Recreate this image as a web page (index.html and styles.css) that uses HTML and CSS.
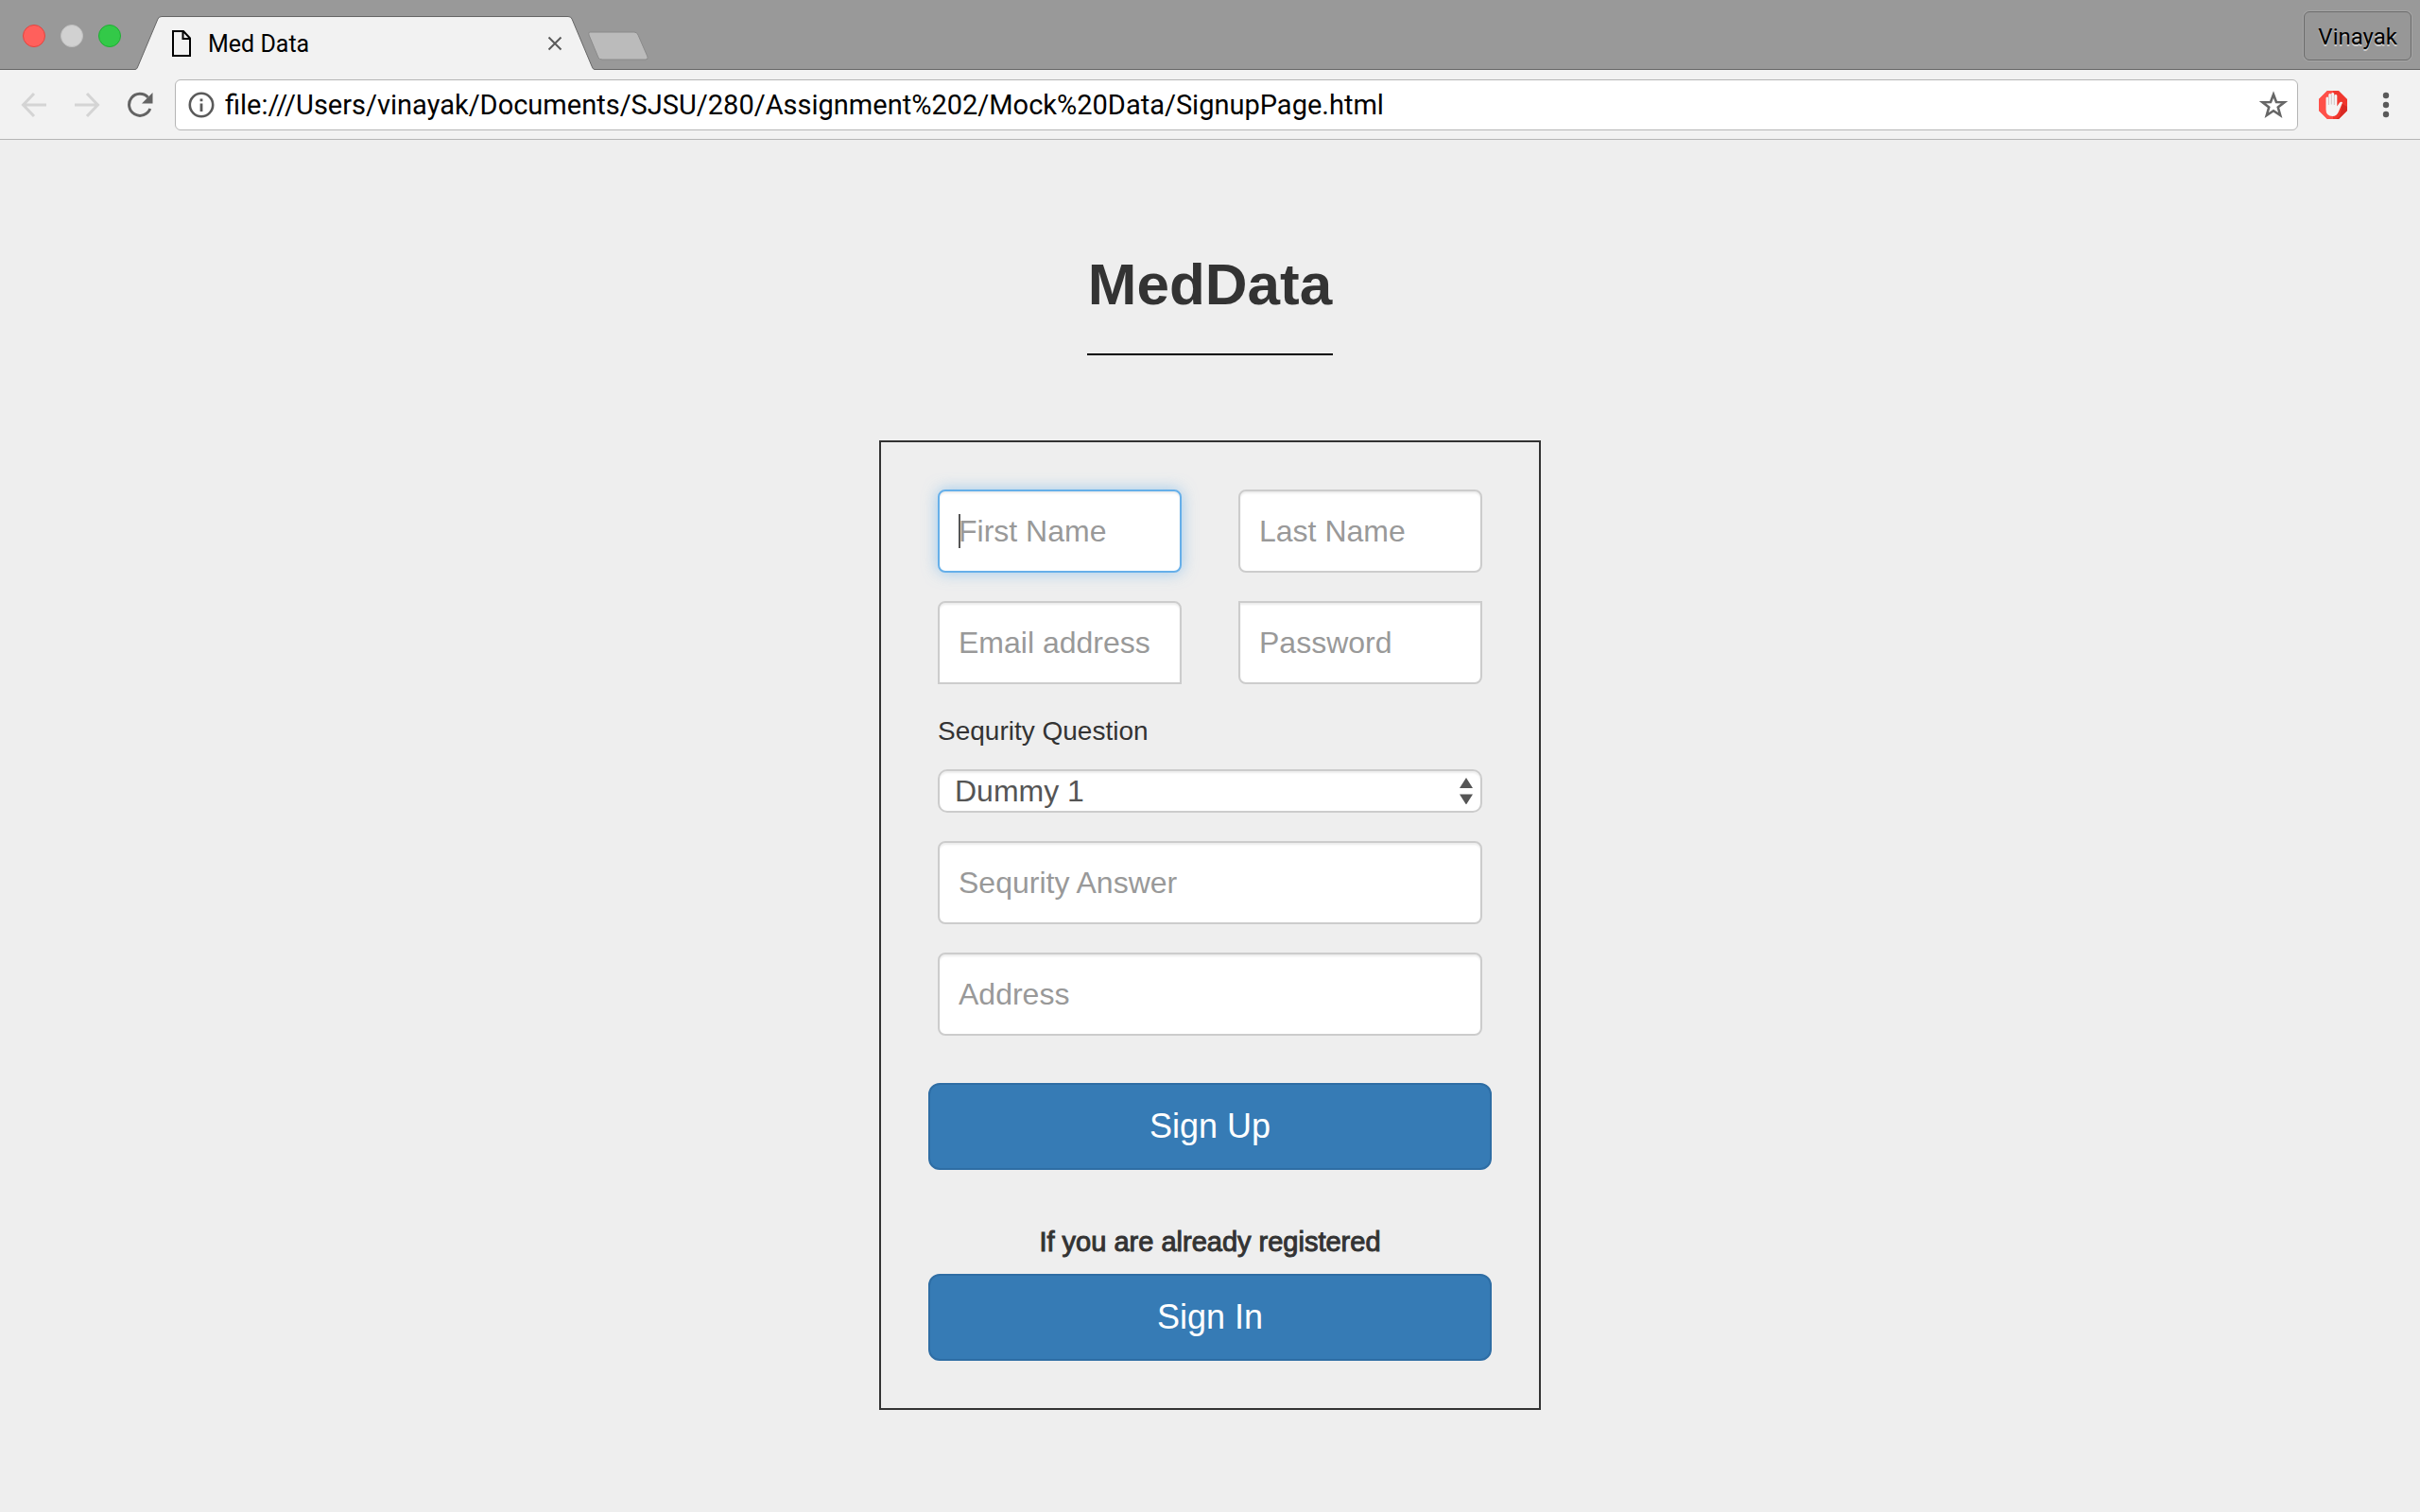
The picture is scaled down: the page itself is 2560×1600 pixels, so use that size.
FILE: index.html
```html
<!DOCTYPE html>
<html lang="en">
<head>
  <meta charset="utf-8">
  <title>Med Data</title>
  <link rel="stylesheet" href="styles.css">
</head>
<body>
  <header class="browser">
    <div class="tab-strip">
      <div class="lights">
        <span class="light light-close"></span>
        <span class="light light-min"></span>
        <span class="light light-max"></span>
      </div>
      <div class="tab">
        <svg class="tab-edge" width="28" height="57" viewBox="0 0 28 57" aria-hidden="true">
          <path d="M0 57 L0 56.500 Q2 56.500 3 53 L24 3 Q25 .5 28 .5 L28 57Z" fill="#f2f2f2"/>
          <path d="M0 56.500 Q2 56.500 3 53 L24 3 Q25 .5 28 .5" fill="none" stroke="#666"/>
        </svg>
        <div class="tab-body">
          <svg width="20" height="28" viewBox="0 0 20 28" fill="none" stroke="#000" stroke-width="2" aria-hidden="true">
            <path d="M1 1H12L19 8.500V27H1ZM11.500 1V9H19"/>
          </svg>
          <span class="tab-title">Med Data</span>
          <button class="icon-button" type="button" aria-label="Close tab">
            <svg width="16" height="16" viewBox="0 0 16 16" stroke="#5a5a5a" stroke-width="2"><path d="M1.500 1.500 14.500 14.500M14.500 1.500 1.500 14.500"/></svg>
          </button>
        </div>
        <svg class="tab-edge" width="28" height="57" viewBox="0 0 28 57" aria-hidden="true">
          <path d="M28 57 L28 56.500 Q26 56.500 25 53 L4 3 Q3 .5 0 .5 L0 57Z" fill="#f2f2f2"/>
          <path d="M28 56.500 Q26 56.500 25 53 L4 3 Q3 .5 0 .5" fill="none" stroke="#666"/>
        </svg>
      </div>
      <button class="icon-button new-tab" type="button" aria-label="New tab">
        <svg width="66" height="32" viewBox="0 0 66 32"><path d="M3 1H50Q53 1 54 4L64 27Q65 30 62 30H16Q13 30 12 28L2 4Q1 1 3 1Z" fill="#bbb" stroke="#8a8a8a"/></svg>
      </button>
      <button class="profile" type="button">Vinayak</button>
    </div>
    <div class="toolbar">
      <button class="icon-button" type="button" aria-label="Back">
        <svg width="28" height="28" viewBox="0 0 28 28" fill="none" stroke="#d4d4d4" stroke-width="3"><path d="M27 14H3M14 2 2.500 14 14 26"/></svg>
      </button>
      <button class="icon-button" type="button" aria-label="Forward">
        <svg width="28" height="28" viewBox="0 0 28 28" fill="none" stroke="#d4d4d4" stroke-width="3"><path d="M1 14H25M14 2 25.500 14 14 26"/></svg>
      </button>
      <button class="icon-button" type="button" aria-label="Reload">
        <svg width="28" height="28" viewBox="0 0 28 28"><path d="M22.500 6A11.500 11.500 0 1 0 24.800 18" fill="none" stroke="#636363" stroke-width="3"/><path d="M27.500 1V12.500H16Z" fill="#636363"/></svg>
      </button>
      <div class="address">
        <svg width="28" height="28" viewBox="0 0 28 28" aria-hidden="true"><circle cx="14" cy="14" r="12.200" fill="none" stroke="#5a5a5a" stroke-width="2.600"/><path d="M12.600 7.500h2.800v2.800h-2.800zM12.600 12.500h2.800v8.500h-2.800z" fill="#5a5a5a"/></svg>
        <input class="url" type="text" aria-label="Address" value="file:///Users/vinayak/Documents/SJSU/280/Assignment%202/Mock%20Data/SignupPage.html">
        <button class="icon-button" type="button" aria-label="Bookmark">
          <svg width="30" height="30" viewBox="0 0 30 30"><path d="M15 4 18 12 26.500 12.300 19.800 17.600 22.200 26 15 21.200 7.800 26 10.200 17.600 3.500 12.300 12 12Z" fill="none" stroke="#666" stroke-width="2.600"/></svg>
        </button>
      </div>
      <div class="extensions">
        <button class="icon-button" type="button" aria-label="Ad blocker">
          <svg width="30" height="30" viewBox="0 0 30 30">
            <path d="M9 0H21L30 9V21L21 30H9L0 21V9Z" fill="#f0382f"/>
            <path d="M9 0H15V30H9L0 21V9Z" fill="#ff5049"/>
            <path d="M25 14 22 27 18 30H21L30 21V17Z" fill="#d92a24"/>
            <path d="M7.500 7.500Q9 5.500 10.300 7.500V4Q11.700 2 13.200 4V3Q14.800 1 16.200 3V5Q18 3 19.300 5V16.500L22 12.500Q24 11 25 12.500L21 22Q19 27 14.500 27Q7.500 27 7.500 20Z" fill="#f4f4f4"/>
            <path d="M10.400 7V15M13.300 4V14.500M16.300 5V15" stroke="#c9b5b5" stroke-width=".8"/>
          </svg>
        </button>
        <button class="icon-button" type="button" aria-label="Menu">
          <svg width="8" height="28" viewBox="0 0 8 28" fill="#5a5a5a"><circle cx="4" cy="4" r="3.200"/><circle cx="4" cy="14" r="3.200"/><circle cx="4" cy="24" r="3.200"/></svg>
        </button>
      </div>
    </div>
  </header>

  <main class="page">
    <h1 class="brand">MedData</h1>
    <form class="card">
      <div class="fields">
        <div class="field-row">
          <div class="field-focus">
            <input class="field field-active" type="text" placeholder="First Name" aria-label="First Name">
            <span class="caret"></span>
          </div>
          <input class="field" type="text" placeholder="Last Name" aria-label="Last Name">
        </div>
        <div class="field-row">
          <input class="field field-email" type="email" placeholder="Email address" aria-label="Email address">
          <input class="field field-password" type="password" placeholder="Password" aria-label="Password">
        </div>
        <div class="question">
          <label class="label" for="question">Sequrity Question</label>
          <div class="select-wrap">
            <select class="select" id="question"><option>Dummy 1</option></select>
            <svg class="select-arrows" width="14" height="28" viewBox="0 0 14 28" fill="#555" aria-hidden="true"><path d="M7 0 14 11H0ZM7 28.500 0 17.500H14Z"/></svg>
          </div>
        </div>
        <input class="field" type="text" placeholder="Sequrity Answer" aria-label="Sequrity Answer">
        <input class="field" type="text" placeholder="Address" aria-label="Address">
      </div>
      <button class="submit" type="submit">Sign Up</button>
      <p class="hint">If you are already registered</p>
      <button class="submit" type="button">Sign In</button>
    </form>
  </main>
</body>
</html>
```
FILE: styles.css
```css
* {
  box-sizing: border-box;
}

body {
  margin: 0;
  min-height: 100vh;
  background: #eee;
  color: #333;
  font-family: "Liberation Sans", Arial, sans-serif;
}

button,
input,
select {
  margin: 0;
  font-family: inherit;
}

svg {
  display: block;
  flex: none;
}

/* Browser window */
.browser {
  font-family: Roboto, sans-serif;
  color: #000;
}

.icon-button {
  flex: none;
  padding: 0;
  border: 0;
  background: none;
}

.tab-strip {
  display: flex;
  height: 74px;
  padding-right: 9px;
  background: #999;
  box-shadow: inset 0 -1px #666;
}

.lights {
  display: flex;
  gap: 16px;
  width: 143px;
  padding: 26px 0 0 24px;
}

.light {
  width: 24px;
  height: 24px;
  border: 1px solid;
  border-radius: 50%;
}

.light-close {
  background: #ff605c;
  border-color: #e2443f;
}

.light-min {
  background: #d1d1d1;
  border-color: #c0c0c0;
}

.light-max {
  background: #33c948;
  border-color: #1fae33;
}

.tab {
  display: flex;
  align-self: flex-end;
  width: 486px;
}

.tab-body {
  flex: 1;
  display: flex;
  align-items: center;
  padding: 0 6px 0 11px;
  border-top: 1px solid #666;
  background: #f2f2f2;
}

.tab-title {
  flex: 1;
  padding-left: 18px;
  font-size: 25px;
}

.new-tab {
  align-self: flex-start;
  margin: 33px auto 0 -8px;
}

.profile {
  align-self: flex-start;
  height: 52px;
  margin-top: 12px;
  padding: 2px 14px 0;
  border: 1px solid #6b6b6b;
  border-radius: 6px;
  background: #979797;
  box-shadow: 0 0 0 1px #a6a6a6;
  color: #000;
  font-size: 24px;
  text-shadow: 0 2px #ccc;
}

.toolbar {
  display: flex;
  align-items: center;
  gap: 28px;
  height: 74px;
  padding: 0 32px 0 22px;
  border-bottom: 1px solid #b5b5b5;
  background: #f2f2f2;
}

.address {
  flex: 1;
  display: flex;
  align-items: center;
  height: 54px;
  margin: 0 -6px 0 -5px;
  padding: 0 10px 0 13px;
  border: 1px solid #b5b5b5;
  border-radius: 6px;
  background: #fff;
}

.extensions {
  display: flex;
  align-items: center;
  gap: 37px;
}

.url {
  flex: 1;
  min-width: 0;
  padding: 0 11px;
  border: 0;
  background: none;
  color: #000;
  font-size: 29px;
}

/* Sign-up page */
.page {
  display: flex;
  flex-direction: column;
  align-items: center;
  padding: 122px 24px 108px;
}

.brand {
  margin: 0 0 90px;
  padding: 0 1px 42px;
  border-bottom: 2px solid #000;
  font-size: 62px;
  line-height: 62px;
}

.card {
  display: flex;
  flex-direction: column;
  width: 100%;
  max-width: 700px;
  padding: 50px;
  border: 2px solid #333;
}

.fields {
  display: flex;
  flex-direction: column;
  gap: 30px;
  margin: 0 10px 50px;
}

.field-row {
  display: grid;
  grid-template-columns: 1fr 1fr;
  gap: 60px;
}

.field {
  width: 100%;
  min-width: 0;
  height: 88px;
  padding: 0 20px;
  border: 2px solid #ccc;
  border-radius: 8px;
  background: #fff;
  box-shadow: inset 0 2px 2px rgba(0, 0, 0, 0.075);
  color: #555;
  font-size: 32px;
}

.field::placeholder {
  color: #999;
}

.field-focus {
  position: relative;
}

.field-active {
  border-color: #66afe9;
  box-shadow: inset 0 2px 2px rgba(0, 0, 0, 0.075), 0 0 16px rgba(102, 175, 233, 0.6);
}

.caret {
  position: absolute;
  top: 26px;
  left: 22px;
  width: 2px;
  height: 36px;
  background: #555;
}

.field-email {
  border-bottom-left-radius: 0;
  border-bottom-right-radius: 0;
}

.field-password {
  border-top-left-radius: 0;
  border-top-right-radius: 0;
}

.question {
  display: flex;
  flex-direction: column;
  gap: 20px;
}

.label {
  font-size: 28px;
  line-height: 40px;
}

.select-wrap {
  position: relative;
}

.select {
  display: block;
  width: 100%;
  height: 46px;
  padding: 0 16px;
  border: 2px solid #ccc;
  border-radius: 10px;
  appearance: none;
  background: #fff;
  box-shadow: inset 0 2px 2px rgba(0, 0, 0, 0.075);
  color: #555;
  font-size: 32px;
  line-height: 40px;
}

.select-arrows {
  position: absolute;
  top: 9px;
  right: 10px;
  pointer-events: none;
}

.submit {
  height: 92px;
  border: 2px solid #2e6da4;
  border-radius: 12px;
  background: #367bb5;
  color: #fff;
  font-size: 36px;
}

.hint {
  margin: 56px 0 14px;
  font-size: 29px;
  line-height: 40px;
  text-align: center;
  -webkit-text-stroke: 1px #333;
}
```
